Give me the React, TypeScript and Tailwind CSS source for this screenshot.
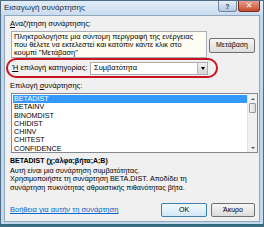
import React from 'react';

const items = ['BETADIST', 'BETAINV', 'BINOMDIST', 'CHIDIST', 'CHINV', 'CHITEST', 'CONFIDENCE'];

const App: React.FC = () => {
  return (
    <div
      className="w-[264px] h-[227px] overflow-hidden bg-[#c3d7ec] border border-[#4d6b85] flex flex-col text-black"
      style={{ fontFamily: '"Liberation Sans", "DejaVu Sans", sans-serif' }}
    >
      {/* Title bar */}
      <div className="h-[14px] flex items-center justify-between pl-[3px] pr-[3px] bg-gradient-to-b from-[#e3edf8] to-[#c9dcef]">
        <span className="text-[8px] leading-[8px] text-[#1a2b3c]">Εισαγωγή συνάρτησης</span>
        <div className="flex gap-[1px] self-start">
          <div className="w-[19px] h-[11px] rounded-b-[3px] border border-[#6d86a3] border-t-0 bg-gradient-to-b from-[#e6eef8] to-[#b3c8e0] flex items-center justify-center text-[7px] leading-none font-bold text-[#2b3f56]">
            ?
          </div>
          <div className="w-[22px] h-[11px] rounded-b-[3px] border border-[#7a2b1d] border-t-0 bg-gradient-to-b from-[#e8a08c] to-[#c44b2c] flex items-center justify-center text-[8px] leading-none font-bold text-white">
            ✕
          </div>
        </div>
      </div>

      {/* Client area */}
      <div className="flex-1 mx-[3px] mb-[4px] bg-[#f0f0f0] border border-[#8fa6bd] flex flex-col px-[4px] pt-[3px]">
        <div className="text-[7.5px] leading-[9px] ml-[1px]">
          <span className="underline">Α</span>ναζήτηση συνάρτησης:
        </div>

        <div className="flex items-center mt-[3px]">
          <div className="ml-[2px] w-[196px] h-[27px] bg-[#fdfdf3] border border-[#abadb3] px-[2px] pt-[1px] text-[7.4px] leading-[8.2px] whitespace-nowrap">
            Πληκτρολογήστε μια σύντομη περιγραφή της ενέργειας
            <br />
            που θέλετε να εκτελεστεί και κατόπιν κάντε κλικ στο
            <br />
            κουμπί "Μετάβαση"
          </div>
          <div className="ml-auto w-[46px] h-[15px] mt-[2px] rounded-[2px] border border-[#707070] bg-gradient-to-b from-[#f6f6f6] to-[#dcdcdc] flex items-center justify-center text-[7px]">
            Μετάβαση
          </div>
        </div>

        {/* Highlighted category row */}
        <div className="-ml-[3px] w-[212px] h-[20px] rounded-[10px] border-2 border-[#c8141e] flex items-center pl-[4px] pr-[8px]">
          <span className="text-[7.5px] leading-none">
            <span className="underline">Ή</span> επιλογή κατηγορίας:
          </span>
          <div className="ml-auto w-[118px] h-[13px] bg-white border border-[#abadb3] flex items-center">
            <span className="text-[7.5px] leading-none pl-[3px]">Συμβατότητα</span>
            <div className="ml-auto w-[10px] h-full border-l border-[#b5b5b5] bg-gradient-to-b from-[#f2f2f2] to-[#d5d5d5] flex items-center justify-center">
              <div className="w-0 h-0 border-l-[2.5px] border-r-[2.5px] border-t-[3px] border-l-transparent border-r-transparent border-t-black" />
            </div>
          </div>
        </div>

        <div className="text-[7.5px] leading-[9px] mt-[3px] ml-[1px]">
          Επιλογή <span className="underline">σ</span>υνάρτησης:
        </div>

        {/* Function list */}
        <div className="mt-[3px] ml-[2px] w-[247px] h-[60px] bg-white border border-[#828790] flex">
          <div className="flex-1 pt-[1px] pl-[1px]">
            {items.map((it, i) => (
              <div
                key={it}
                className={`h-[8.3px] text-[7.2px] leading-[8.3px] pl-[1px] ${i === 0 ? 'bg-[#3399ff] text-white' : ''}`}
              >
                {it}
              </div>
            ))}
          </div>
          <div className="w-[10px] bg-[#f0f0f0] border-l border-[#e3e3e3] flex flex-col">
            <div className="h-[9px] flex items-center justify-center">
              <div className="w-0 h-0 border-l-[2px] border-r-[2px] border-b-[2px] border-l-transparent border-r-transparent border-b-[#505050]" />
            </div>
            <div className="h-[10px] mx-[1px] rounded-[1px] border border-[#9a9a9a] bg-gradient-to-r from-[#f2f2f2] to-[#d9d9d9]" />
            <div className="flex-1" />
            <div className="h-[9px] flex items-center justify-center">
              <div className="w-0 h-0 border-l-[2px] border-r-[2px] border-t-[2px] border-l-transparent border-r-transparent border-t-[#505050]" />
            </div>
          </div>
        </div>

        <div className="text-[7px] leading-[9px] font-bold mt-[3px] ml-[1px]">BETADIST (χ;άλφα;βήτα;A;B)</div>
        <div className="text-[7.2px] leading-[8.3px] mt-[2px] ml-[1px] whitespace-nowrap">
          Αυτή είναι μια συνάρτηση συμβατότητας.
          <br />
          Χρησιμοποιήστε τη συνάρτηση BETA.DIST. Αποδίδει τη
          <br />
          συνάρτηση πυκνότητας αθροιστικής πιθανότητας βήτα.
        </div>

        <div className="mt-auto mb-[4px] flex items-center">
          <span className="ml-[1px] text-[7.5px] leading-none text-[#0066cc] underline">
            Βοήθεια για αυτήν τη συνάρτηση
          </span>
          <div className="ml-auto flex gap-[4px]">
            <div className="w-[46px] h-[14px] rounded-[2px] border border-[#3c7fb1] bg-gradient-to-b from-[#f2f9fd] to-[#d2e8f7] flex items-center justify-center text-[7px]">
              OK
            </div>
            <div className="w-[44px] h-[14px] rounded-[2px] border border-[#707070] bg-gradient-to-b from-[#f6f6f6] to-[#dcdcdc] flex items-center justify-center text-[7px]">
              Άκυρο
            </div>
          </div>
        </div>
      </div>
      <div className="h-[2px] bg-[#2f6b7e] -mt-[2px]" />
    </div>
  );
};

export default App;
